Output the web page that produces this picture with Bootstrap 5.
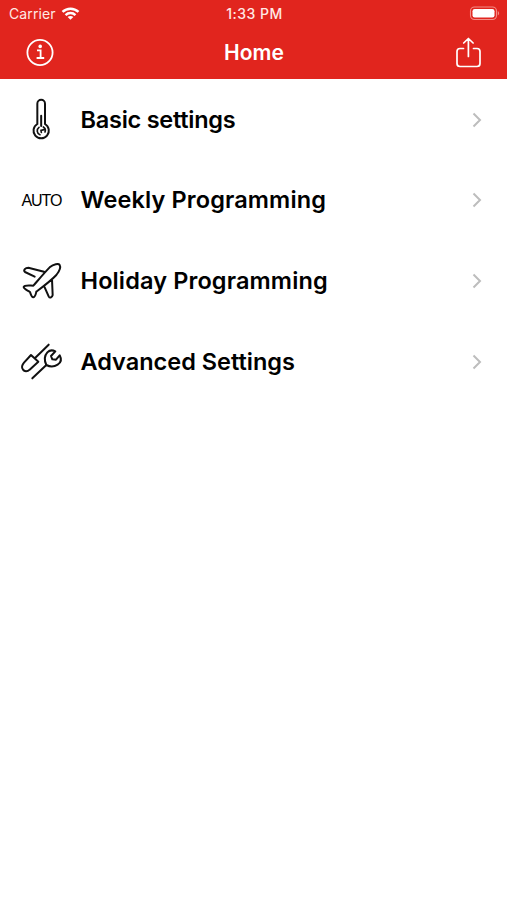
<!DOCTYPE html>
<html lang="en">
<head>
<meta charset="utf-8">
<meta name="viewport" content="width=device-width, initial-scale=1">
<title>Home</title>
<link href="https://cdn.jsdelivr.net/npm/bootstrap@5.3.0/dist/css/bootstrap.min.css" rel="stylesheet">
<style>
body { font-family: Inter, "Liberation Sans", sans-serif; background: #fff; color: #000; }
.app-header { background: #e1251e; height: 79px; }
.status-bar { height: 27px; font-size: 14px; line-height: 27px; padding: 0 7px 0 9px; color: #ffe9e5; letter-spacing: .1px; }
.status-bar > *, .title-bar > * { flex: 1 1 0; }
.carrier { gap: 5.5px; }
.clock { font-weight: 500; letter-spacing: .5px; }
.title-bar { height: 52px; padding: 0 24px 0 25px; }
.title-bar h1 { font-size: 21px; font-weight: 600; line-height: 50px; }
.menu-list { padding-top: .5px; }
.menu-row { height: 80.6px; padding: 0 24.5px 0 18px; }
.menu-icon { width: 48px; height: 60px; margin-right: 14.5px; flex: none; }
.menu-icon svg, .title-bar svg, .status-bar svg, .chevron { display: block; }
.auto-text { font: 16px/62px "Liberation Sans", Arial, sans-serif; padding-left: 3.5px; letter-spacing: -1.1px; }
.menu-label { font-size: 23.5px; font-weight: 600; line-height: 30px; white-space: nowrap; }
.label-tight { letter-spacing: -.25px; }
.label-wide { letter-spacing: .13px; }
</style>
</head>
<body>
<header class="app-header text-white">
  <div class="status-bar d-flex align-items-center">
    <div class="carrier d-flex align-items-center">
      <span>Carrier</span>
      <svg width="19" height="15" viewBox="0 0 20 15" fill="none" stroke="#fff" stroke-width="2.6"><path d="M1.6 5.9C6.3 1.3 13.7 1.3 18.4 5.9M4.8 9.2C7.7 6.3 12.3 6.3 15.2 9.2"/><path d="M10 14.2 7 11.3C8.6 9.8 11.4 9.8 13 11.3Z" fill="#fff" stroke="none"/></svg>
    </div>
    <span class="clock text-center">1:33 PM</span>
    <div class="d-flex justify-content-end">
      <svg width="31" height="15" viewBox="0 0 31 15"><rect x="1.500" y="1" width="26" height="12.500" rx="4" fill="none" stroke="#f28d86" stroke-width="1.1"/><rect x="3.500" y="3" width="22" height="8.500" rx="2.200" fill="#fff"/><path d="M28.800 5v4.400c1.800-.8 1.800-3.600 0-4.400Z" fill="#f28d86"/></svg>
    </div>
  </div>
  <nav class="title-bar d-flex align-items-center" aria-label="Main">
    <div><svg width="30" height="30" viewBox="0 0 30 30" fill="none" stroke="#fff" stroke-width="1.8"><circle cx="15" cy="14.500" r="12.600"/><path d="M12 12.300H15.600V19.800M11.600 20H19.200"/><circle cx="15.200" cy="8.400" r="1.800" fill="#fff" stroke="none"/></svg></div>
    <h1 class="m-0 text-center">Home</h1>
    <div class="d-flex justify-content-end"><svg width="30" height="34" viewBox="0 0 30 34" fill="none" stroke="#fff" stroke-width="1.700" stroke-linecap="round" stroke-linejoin="round"><path d="M10.500 12.500H7a3 3 0 0 0-3 3v12a3 3 0 0 0 3 3h17a3 3 0 0 0 3-3V15.500a3 3 0 0 0-3-3h-3.500M15.400 20.500V2.500M10.700 7 15.400 2.500l4.700 4.500"/></svg></div>
  </nav>
</header>
<main class="menu-list">
  <div class="menu-row d-flex align-items-center">
    <div class="menu-icon"><svg width="48" height="60" viewBox="24 0 144 180" fill="none" stroke="#111" stroke-width="6" stroke-linecap="round"><path d="M82 102V41a11.500 11.500 0 0 1 23 0V102A23 23 0 1 1 82 102ZM93.500 77V108"/><path stroke-width="5" d="M87 112A12.500 12.500 0 0 0 90 134M100 111A12.500 12.500 0 0 1 105 126M94 127 93 121 102 119"/></svg></div>
    <span class="menu-label label-tight">Basic settings</span>
    <svg class="chevron ms-auto" width="12" height="18" viewBox="0 0 12 18" fill="none" stroke="#bdbdbd" stroke-width="2"><path d="M2.500 2.500 9 9 2.500 15.500"/></svg>
  </div>
  <div class="menu-row d-flex align-items-center">
    <div class="menu-icon auto-text">AUTO</div>
    <span class="menu-label label-wide">Weekly Programming</span>
    <svg class="chevron ms-auto" width="12" height="18" viewBox="0 0 12 18" fill="none" stroke="#bdbdbd" stroke-width="2"><path d="M2.500 2.500 9 9 2.500 15.500"/></svg>
  </div>
  <div class="menu-row d-flex align-items-center">
    <div class="menu-icon"><svg width="48" height="60" viewBox="24 3 144 180" fill="none" stroke="#111" stroke-width="6" stroke-linecap="round" stroke-linejoin="round"><path d="M70 107C84 91 105 66 119 52C131 42 146 40 149 45C153 52 147 65 139 75C121 94 99 110 79 125C77 134 76 141 70 142C65 143 62 132 60 126C53 121 41 117 41 111C43 104 60 107 70 107ZM102 65 55 53C46 53 39 61 45 66L74 80M126 88 128 135C126 144 119 145 116 139L104 112"/></svg></div>
    <span class="menu-label label-wide">Holiday Programming</span>
    <svg class="chevron ms-auto" width="12" height="18" viewBox="0 0 12 18" fill="none" stroke="#bdbdbd" stroke-width="2"><path d="M2.500 2.500 9 9 2.500 15.500"/></svg>
  </div>
  <div class="menu-row d-flex align-items-center">
    <div class="menu-icon"><svg width="48" height="60" viewBox="24 5 144 180" fill="none" stroke="#111" stroke-width="6" stroke-linecap="round" stroke-linejoin="round"><path d="M116 43 76 82M63 74 85 94 59 118C52 125 43 124 39 118C34 112 36 104 42 97ZM67 144 109 104M109 104C103 91 103 76 112 66C118 60 128 59 136 63L123 77 127 87 138 88 149 75C155 86 153 97 143 103C133 109 119 109 109 104"/></svg></div>
    <span class="menu-label">Advanced Settings</span>
    <svg class="chevron ms-auto" width="12" height="18" viewBox="0 0 12 18" fill="none" stroke="#bdbdbd" stroke-width="2"><path d="M2.500 2.500 9 9 2.500 15.500"/></svg>
  </div>
</main>
<script src="https://cdn.jsdelivr.net/npm/bootstrap@5.3.0/dist/js/bootstrap.bundle.min.js"></script>
</body>
</html>
